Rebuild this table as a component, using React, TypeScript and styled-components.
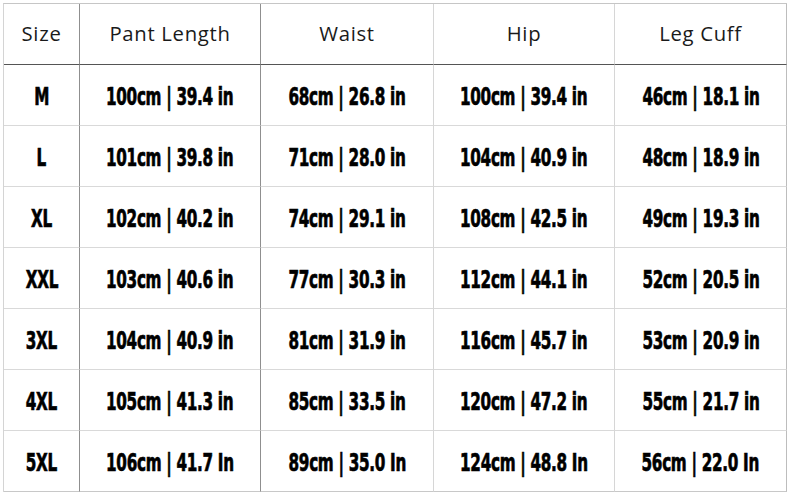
import React from "react";
import styled, { createGlobalStyle } from "styled-components";

const Global = createGlobalStyle`
  html, body { margin: 0; padding: 0; background: #ffffff; }
  body { width: 790px; height: 495px; overflow: hidden; }
`;

const Page = styled.div`
  padding: 3px 0 0 3px;
  background: #fff;
`;

const Grid = styled.div`
  display: grid;
  grid-template-columns: 76px 181px 173px 181px 172px;
  grid-template-rows: 61px repeat(7, 61px);
  border-top: 1px solid #c6c6c6;
  border-left: 1px solid #d4d4d4;
  width: max-content;
`;

const Cell = styled.div<{ $col: number; $head?: boolean; $last?: boolean }>`
  box-sizing: border-box;
  display: flex;
  align-items: center;
  justify-content: center;
  border-right: 1px solid
    ${(p) => (p.$col === 4 ? "#bdbdbd" : p.$col <= 1 ? "#8f8f8f" : "#d6d6d6")};
  border-bottom: 1px solid
    ${(p) => (p.$head ? "#555555" : p.$last ? "#c8c8c8" : "#d9d9d9")};
  white-space: nowrap;
`;

const HeadText = styled.span`
  font-family: "Open Sans", "Noto Sans", sans-serif;
  font-size: 20.3px;
  letter-spacing: 0.7px;
  color: #1a1a1a;
  margin-top: -2px;
`;

const DataText = styled.span`
  display: inline-block;
  font-family: "DejaVu Sans Condensed", "DejaVu Sans", sans-serif;
  font-weight: 700;
  font-size: 22px;
  color: #000;
  letter-spacing: -0.4px;
  transform: scale(0.77, 1.1);
  -webkit-text-stroke: 0.6px #000;
  margin-top: 2px;
`;

const headers = ["Size", "Pant Length", "Waist", "Hip", "Leg Cuff"];

const rows = [
  ["M", "100cm | 39.4 in", "68cm | 26.8 in", "100cm | 39.4 in", "46cm | 18.1 in"],
  ["L", "101cm | 39.8 in", "71cm | 28.0 in", "104cm | 40.9 in", "48cm | 18.9 in"],
  ["XL", "102cm | 40.2 in", "74cm | 29.1 in", "108cm | 42.5 in", "49cm | 19.3 in"],
  ["XXL", "103cm | 40.6 in", "77cm | 30.3 in", "112cm | 44.1 in", "52cm | 20.5 in"],
  ["3XL", "104cm | 40.9 in", "81cm | 31.9 in", "116cm | 45.7 in", "53cm | 20.9 in"],
  ["4XL", "105cm | 41.3 in", "85cm | 33.5 in", "120cm | 47.2 in", "55cm | 21.7 in"],
  ["5XL", "106cm | 41.7 In", "89cm | 35.0 In", "124cm | 48.8 In", "56cm | 22.0 In"],
];

export default function App() {
  return (
    <>
      <Global />
      <Page>
        <Grid>
          {headers.map((h, i) => (
            <Cell key={h} $col={i} $head>
              <HeadText>{h}</HeadText>
            </Cell>
          ))}
          {rows.map((r, ri) =>
            r.map((v, ci) => (
              <Cell key={`${ri}-${ci}`} $col={ci} $last={ri === rows.length - 1}>
                <DataText>{v}</DataText>
              </Cell>
            ))
          )}
        </Grid>
      </Page>
    </>
  );
}
